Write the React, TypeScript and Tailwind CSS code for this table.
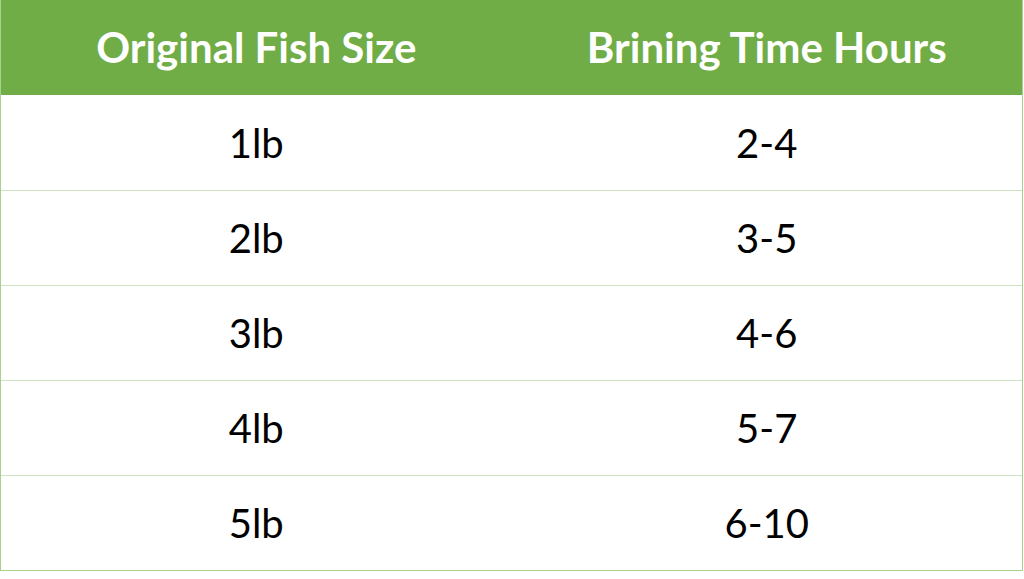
const rows = [
  { size: '1lb', time: '2-4' },
  { size: '2lb', time: '3-5' },
  { size: '3lb', time: '4-6' },
  { size: '4lb', time: '5-7' },
  { size: '5lb', time: '6-10' },
];

export default function App() {
  return (
    <div className="w-[1024px] h-[579px] bg-white" style={{ fontFamily: 'Lato, "Open Sans", sans-serif' }}>
      <div className="w-[1023px] border-l border-r border-b border-[#a9d08e]">
        <div className="grid grid-cols-2 h-[95px] bg-[#70ad47] text-white font-bold text-[42px] items-center text-center">
          <div>Original Fish Size</div>
          <div>Brining Time Hours</div>
        </div>
        {rows.map((row, idx) => (
          <div
            key={row.size}
            className={`grid grid-cols-2 h-[95px] items-center text-center text-black text-[40px] ${idx > 0 ? 'border-t border-[#cfe3c0]' : ''}`}
          >
            <div>{row.size}</div>
            <div>{row.time}</div>
          </div>
        ))}
      </div>
    </div>
  );
}
